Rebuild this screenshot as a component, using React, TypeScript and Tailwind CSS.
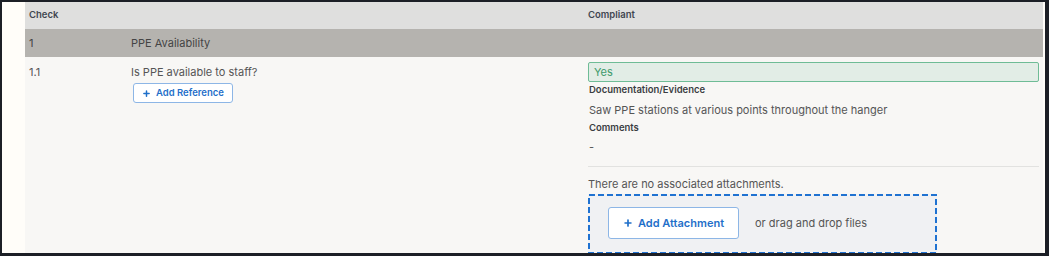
import { Plus } from "lucide-react";

const font = { fontFamily: "Inter, 'Noto Sans', sans-serif" };

function AddButton({ label, size }: { label: string; size: "sm" | "lg" }) {
  if (size === "sm") {
    return (
      <button className="flex h-[20px] w-[100px] items-center justify-center gap-[5px] rounded-[3px] border border-[#8db6e6] bg-white text-[9.5px] font-semibold text-[#1f6fc9]">
        <Plus className="size-[9px]" strokeWidth={4} />
        {label}
      </button>
    );
  }
  return (
    <button className="flex h-[32px] w-[131px] items-center justify-center gap-[5px] rounded-[3px] border border-[#8db6e6] bg-white text-[11px] font-semibold text-[#1f6fc9]">
      <Plus className="size-[10px]" strokeWidth={4} />
      {label}
    </button>
  );
}

export default function App() {
  return (
    <div
      style={font}
      className="box-border h-[256px] w-[1049px] overflow-hidden border-t-2 border-r-4 border-b-[3px] border-l-2 border-[#1c1f26] bg-[#fffdf9] pr-[2px] pl-[23px]"
    >
      <div className="h-full bg-[#f8f7f5]">
        {/* header */}
        <div className="grid h-[27px] grid-cols-[102px_457px_1fr] items-center bg-[#dfdfde] text-[9.5px] font-semibold text-[#414650]">
          <span className="pl-[4px]">Check</span>
          <span />
          <span className="pl-[4px]">Compliant</span>
        </div>

        {/* section */}
        <div className="grid h-[28px] grid-cols-[102px_457px_1fr] items-center bg-[#b5b3af] text-[11px] text-[#444]">
          <span className="pl-[4px]">1</span>
          <span className="pl-[4px]">PPE Availability</span>
          <span />
        </div>

        {/* check row */}
        <div className="grid grid-cols-[102px_457px_1fr] text-[11px] text-[#555]">
          <div className="pt-[6px] pl-[4px] leading-[18px]">1.1</div>
          <div className="pt-[6px] pl-[4px]">
            <div className="leading-[18px]">Is PPE available to staff?</div>
            <div className="mt-[2px] pl-[2px]">
              <AddButton label="Add Reference" size="sm" />
            </div>
          </div>
          <div className="pt-[5px] pr-[4px] pl-[4px]">
            <div className="flex h-[20px] items-center rounded-[2px] border border-[#6fbc96] bg-[#e2ede6] pl-[5px] text-[11px] text-[#3d9a6b]">
              Yes
            </div>
            <div className="mt-[1px] pl-[1px] text-[9.5px] leading-[14px] font-semibold text-[#3b3d42]">
              Documentation/Evidence
            </div>
            <div className="mt-[4px] pl-[1px] leading-[18px]">
              Saw PPE stations at various points throughout the hanger
            </div>
            <div className="mt-[2px] pl-[1px] text-[9.5px] leading-[14px] font-semibold text-[#3b3d42]">
              Comments
            </div>
            <div className="mt-[3px] pl-[1px] leading-[18px]">-</div>
            <div className="mt-[10px] h-px bg-[#e2e2e0]" />
            <div className="mt-[8px] leading-[18px]">There are no associated attachments.</div>
            <div className="relative mt-[1px] flex h-[60px] w-[349px] items-start gap-[16px] bg-[#f0f1f3] pt-[13px] pl-[20px]">
              <svg className="pointer-events-none absolute inset-0" width="349" height="60">
                <rect
                  x="1"
                  y="1"
                  width="347"
                  height="58"
                  fill="none"
                  stroke="#1f72d1"
                  strokeWidth="2"
                  strokeDasharray="6 3"
                />
              </svg>
              <AddButton label="Add Attachment" size="lg" />
              <span className="mt-[7px] leading-[18px] text-[#555]">or drag and drop files</span>
            </div>
          </div>
        </div>
      </div>
    </div>
  );
}
